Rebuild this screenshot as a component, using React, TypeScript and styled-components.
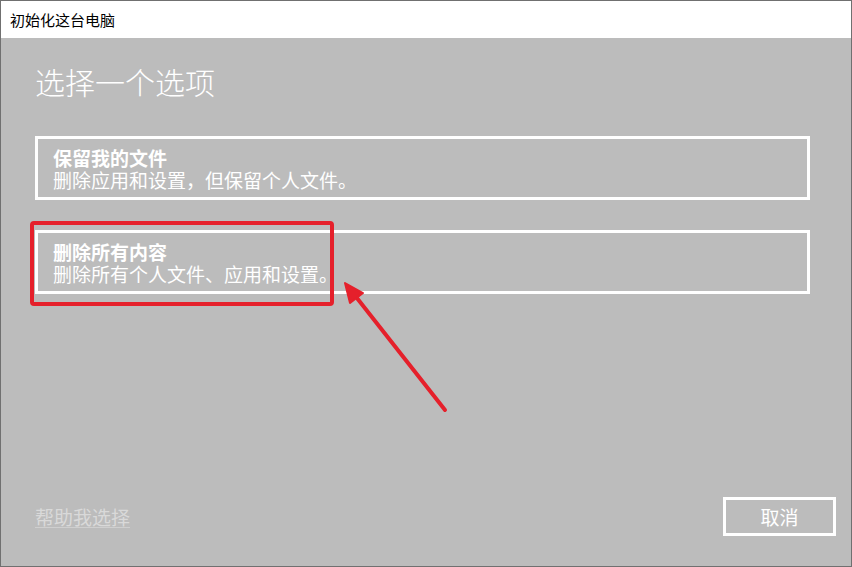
import React from 'react';
import styled, { createGlobalStyle } from 'styled-components';

// Reset-this-PC style dialog: white caption bar, grey body, two outlined
// choice cards and a footer with a help link and a cancel button.

const GlobalStyle = createGlobalStyle`
  html, body {
    margin: 0;
    padding: 0;
    background: #bcbcbc;
  }
  body {
    font-family: "Noto Sans CJK SC", "Noto Sans", "Liberation Sans", sans-serif;
  }
  * { box-sizing: border-box; }
`;

const Window = styled.div`
  position: relative;
  width: 852px;
  height: 567px;
  display: flex;
  flex-direction: column;
  border: 1px solid #707070;
  background: #bcbcbc;
  overflow: hidden;
`;

const TitleBar = styled.div`
  height: 37px;
  flex: none;
  display: flex;
  align-items: center;
  padding-left: 9px;
  background: #ffffff;
  color: #000000;
  font-size: 15px;
  line-height: 20px;
`;

const Body = styled.div`
  flex: 1;
  display: flex;
  flex-direction: column;
  padding: 21px 15px 30px 34px;
`;

const Heading = styled.h1`
  margin: 0;
  font-size: 30px;
  font-weight: 300;
  line-height: 44px;
  color: #ffffff;
`;

const Options = styled.div`
  display: flex;
  flex-direction: column;
  gap: 30px;
  margin: 33px 26px 0 0;
`;

const Option = styled.button`
  display: flex;
  flex-direction: column;
  align-items: flex-start;
  height: 64px;
  padding: 10px 15px 0;
  border: 3px solid #ffffff;
  background: transparent;
  color: #ffffff;
  font-family: "Liberation Sans", "Noto Sans CJK SC", sans-serif;
  text-align: left;
  cursor: pointer;
`;

const OptionTitle = styled.span`
  display: block;
  font-size: 19px;
  font-weight: 700;
  line-height: 22px;
`;

const OptionText = styled.span`
  display: block;
  font-size: 19px;
  font-weight: 400;
  line-height: 22px;
`;

const Spacer = styled.div`
  flex: 1;
`;

const Footer = styled.div`
  display: flex;
  align-items: center;
  justify-content: space-between;
`;

const HelpLink = styled.a`
  font-size: 19px;
  line-height: 24px;
  color: #d9d9d9;
  text-decoration: underline;
  text-decoration-color: #cfcfcf;
  text-underline-offset: 2px;
  cursor: pointer;
`;

const CancelButton = styled.button`
  width: 113px;
  height: 39px;
  border: 3px solid #ffffff;
  background: transparent;
  color: #ffffff;
  font-family: inherit;
  font-size: 19px;
  line-height: 22px;
  cursor: pointer;
`;

// Red callout drawn over the second card
const Callout = styled.svg`
  position: absolute;
  left: 0;
  top: 0;
  pointer-events: none;
`;

const options = [
  { title: '保留我的文件', text: '删除应用和设置，但保留个人文件。' },
  { title: '删除所有内容', text: '删除所有个人文件、应用和设置。' },
];

export default function App() {
  return (
    <>
      <GlobalStyle />
      <Window>
        <TitleBar>初始化这台电脑</TitleBar>
        <Body>
          <Heading>选择一个选项</Heading>
          <Options>
            {options.map((o) => (
              <Option key={o.title}>
                <OptionTitle>{o.title}</OptionTitle>
                <OptionText>{o.text}</OptionText>
              </Option>
            ))}
          </Options>
          <Spacer />
          <Footer>
            <HelpLink>帮助我选择</HelpLink>
            <CancelButton>取消</CancelButton>
          </Footer>
        </Body>
        <Callout width="852" height="567" viewBox="0 0 852 567">
          <rect x="31" y="222" width="300" height="81" rx="2" fill="none" stroke="#e5202b" strokeWidth="4" />
          <line x1="444" y1="409" x2="352" y2="292" stroke="#e5202b" strokeWidth="4" strokeLinecap="round" />
          <polygon points="344,282 362,292 349,302" fill="#e5202b" stroke="#e5202b" strokeWidth="2" strokeLinejoin="round" />
        </Callout>
      </Window>
    </>
  );
}
